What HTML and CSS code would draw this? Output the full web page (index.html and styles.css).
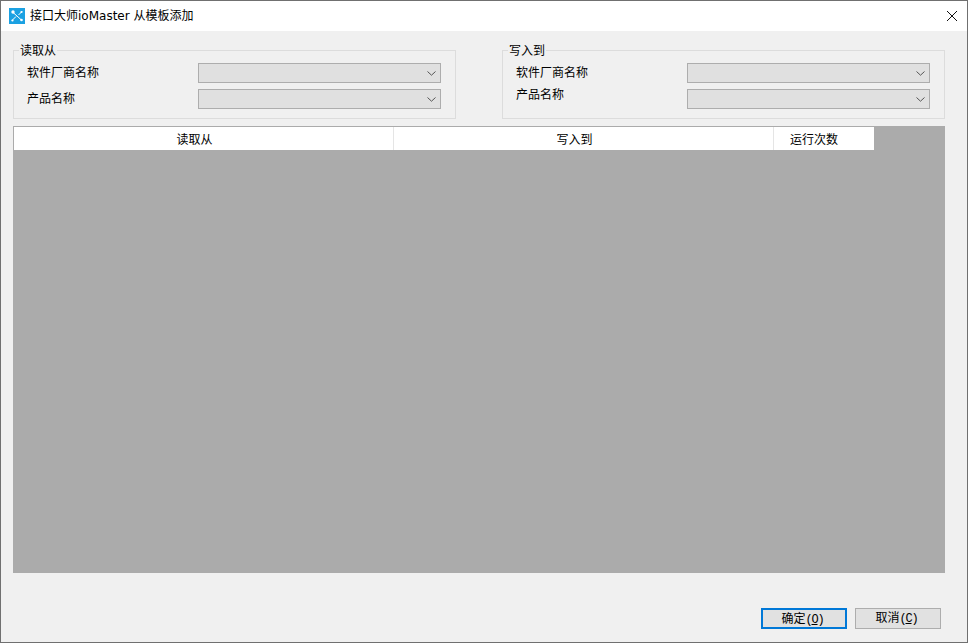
FILE: index.html
```html
<!DOCTYPE html>
<html lang="zh-CN">
<head>
<meta charset="utf-8">
<title>接口大师ioMaster 从模板添加</title>
<link rel="stylesheet" href="styles.css">
</head>
<body>
<div class="window">
  <header class="titlebar">
    <svg class="app-icon" width="16" height="16" viewBox="0 0 16 16">
      <rect width="16" height="16" fill="#1ba1e2"/>
      <path d="M3 3.5 L13 12.5 M3 12.5 L7 8.5 M9.5 7 L13 3.5" stroke="#fff" stroke-width="1" fill="none"/>
      <circle cx="4" cy="4" r="1.7" fill="#fff"/>
      <circle cx="12.5" cy="12" r="1.3" fill="#fff"/>
      <circle cx="3.5" cy="12.5" r="1.1" fill="#fff"/>
      <circle cx="12.5" cy="4" r="1.1" fill="#fff"/>
    </svg>
    <span class="title">接口大师ioMaster 从模板添加</span>
    <svg class="close" width="12" height="12" viewBox="0 0 12 12">
      <path d="M1 1 L11 11 M11 1 L1 11" stroke="#111" stroke-width="1" fill="none"/>
    </svg>
  </header>
  <main class="content">
    <section class="groups">
      <fieldset class="group">
        <legend>读取从</legend>
        <div class="rows">
          <label class="field-label">软件厂商名称</label>
          <div class="combo"><svg class="chev" width="9" height="5" viewBox="0 0 9 5"><path d="M0.5 0.5 L4.5 4.2 L8.5 0.5" stroke="#555" fill="none"/></svg></div>
          <label class="field-label">产品名称</label>
          <div class="combo"><svg class="chev" width="9" height="5" viewBox="0 0 9 5"><path d="M0.5 0.5 L4.5 4.2 L8.5 0.5" stroke="#555" fill="none"/></svg></div>
        </div>
      </fieldset>
      <fieldset class="group">
        <legend>写入到</legend>
        <div class="rows">
          <label class="field-label">软件厂商名称</label>
          <div class="combo"><svg class="chev" width="9" height="5" viewBox="0 0 9 5"><path d="M0.5 0.5 L4.5 4.2 L8.5 0.5" stroke="#555" fill="none"/></svg></div>
          <label class="field-label raised">产品名称</label>
          <div class="combo"><svg class="chev" width="9" height="5" viewBox="0 0 9 5"><path d="M0.5 0.5 L4.5 4.2 L8.5 0.5" stroke="#555" fill="none"/></svg></div>
        </div>
      </fieldset>
    </section>
    <section class="grid">
      <div class="grid-head">
        <div class="col col-wide">读取从</div>
        <div class="col col-wide">写入到</div>
        <div class="col col-count">运行次数</div>
      </div>
    </section>
    <footer class="actions">
      <button class="btn btn-default" type="button">确定<span class="mnemonic">(<u>O</u>)</span></button>
      <button class="btn" type="button">取消<span class="mnemonic">(<u>C</u>)</span></button>
    </footer>
  </main>
</div>
</body>
</html>
```
FILE: styles.css
```css
* { box-sizing: border-box; }
html, body { margin: 0; padding: 0; }
body {
  width: 968px;
  height: 643px;
  overflow: hidden;
  font-family: "Noto Sans CJK SC", "Liberation Sans", sans-serif;
  font-size: 12px;
  color: #000;
}
.window {
  width: 968px;
  height: 643px;
  display: flex;
  flex-direction: column;
  border: 1px solid #707070;
  background: #f0f0f0;
}
.titlebar {
  height: 30px;
  flex: none;
  display: flex;
  align-items: center;
  background: #fff;
  padding: 0 9px 1px 8px;
}
.app-icon { flex: none; }
.title {
  margin-left: 5px;
  line-height: 16px;
  font-family: "DejaVu Sans", "Noto Sans CJK SC", sans-serif;
}
.close { margin-left: auto; }
.content {
  flex: 1;
  display: flex;
  flex-direction: column;
  padding: 11px 22px 13px 12px;
}
.groups {
  display: flex;
  justify-content: space-between;
  height: 77px;
  flex: none;
}
.group {
  width: 443px;
  height: 77px;
  margin: 0;
  padding: 0 14px 0 12px;
  border: 1px solid #dcdcdc;
  min-width: 0;
}
.group legend {
  margin-left: -7px;
  padding: 0 1px;
  line-height: 16px;
  height: 16px;
}
.rows {
  display: grid;
  grid-template-columns: 172px 243px;
  grid-template-rows: 20px 20px;
  row-gap: 6px;
  margin-top: 5px;
}
.field-label {
  align-self: center;
  line-height: 16px;
  margin: -3px 0 0 1px;
}
.field-label.raised { margin-top: -11px; }
.combo {
  display: flex;
  align-items: center;
  justify-content: flex-end;
  padding-right: 4px;
  background: #e0e0e0;
  border: 1px solid #adadad;
}
.chev { flex: none; }
.grid {
  flex: none;
  width: 932px;
  height: 447px;
  margin-top: 7px;
  background: #ababab;
  padding: 1px 0 0 1px;
}
.grid-head {
  display: flex;
  width: 860px;
  height: 23px;
  background: #fff;
}
.col {
  display: flex;
  align-items: center;
  justify-content: center;
  line-height: 16px;
  border-right: 1px solid #e5e5e5;
}
.col-wide { width: 380px; padding-right: 18px; }
.col-count { width: 100px; padding-right: 20px; border-right: 0; }
.actions {
  flex: 1;
  display: flex;
  justify-content: flex-end;
  align-items: flex-end;
  gap: 8px;
  padding-right: 4px;
}
.btn {
  width: 86px;
  height: 21px;
  padding: 0 0 1px;
  font: inherit;
  line-height: 16px;
  color: #000;
  background: #e1e1e1;
  border: 1px solid #adadad;
}
.btn-default { border: 2px solid #0078d7; }
.mnemonic {
  font-family: "Liberation Mono", monospace;
  letter-spacing: -1.2px;
  margin-right: 3px;
}
```
